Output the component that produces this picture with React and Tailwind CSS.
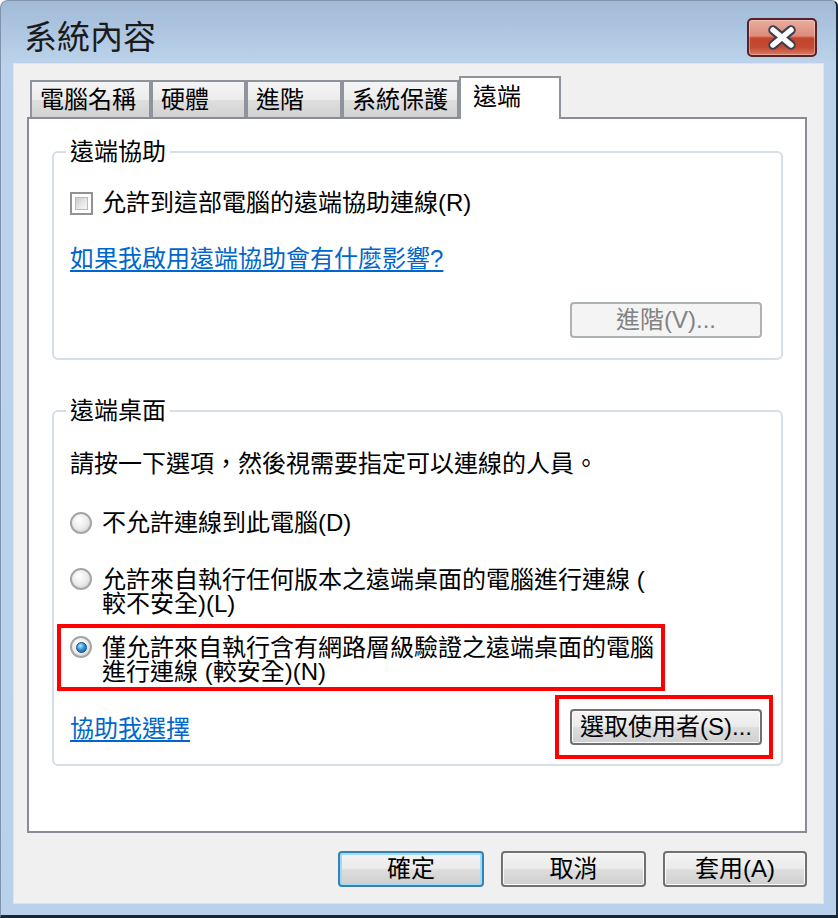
const font = "font-['Liberation_Sans','Noto_Sans_CJK_TC',sans-serif]"

const TABS = [
  { label: '電腦名稱', w: 'w-[121px]' },
  { label: '硬體', w: 'w-[95px]' },
  { label: '進階', w: 'w-[96px]' },
  { label: '系統保護', w: 'w-[117px]' },
]

function Radio({ checked }) {
  return (
    <span className="w-[22px] h-[22px] shrink-0 rounded-full border-2 border-[#a3a5a8] bg-[radial-gradient(circle_at_40%_35%,#ffffff,#ececec_50%,#c8c8c8)] flex items-center justify-center">
      {checked && (
        <span className="w-[11px] h-[11px] rounded-full border border-[#1b4a78] bg-[radial-gradient(circle_at_38%_32%,#b4ecff,#2f95dc_45%,#144e8a)]" />
      )}
    </span>
  )
}

function Checkbox() {
  return (
    <span className="w-[23px] h-[23px] shrink-0 border-2 border-[#929292] bg-white p-[3px] flex">
      <span className="flex-1 bg-[linear-gradient(135deg,#c9cbce,#e9e9e9_60%,#f7f7f7)] border border-[#b9bbbe]" />
    </span>
  )
}

function WinButton({ children, className = '', primary, disabled }) {
  let look = 'border-[#707070] bg-[linear-gradient(to_bottom,#f3f3f3_0%,#ebebeb_48%,#dddddd_52%,#cfcfcf_100%)] shadow-[inset_0_0_0_1px_#fbfbfb] text-black'
  if (primary) look = 'border-[#3c7fb1] bg-[linear-gradient(to_bottom,#f3f3f3_0%,#ebebeb_48%,#dddddd_52%,#cfcfcf_100%)] shadow-[inset_0_0_0_2px_#9bdcf8] text-black'
  if (disabled) look = 'border-[#adb2b5] bg-[#f4f4f4] text-[#838383]'
  return (
    <div className={`h-[36px] rounded-[4px] border-2 flex items-center justify-center text-[24px] leading-[24px] ${look} ${className}`}>
      {children}
    </div>
  )
}

function GroupBox({ title, children, className = '' }) {
  return (
    <fieldset className={`ml-[23px] mr-[22px] border-2 border-[#d5dfe5] rounded-[6px] pl-[12px] pr-[19px] ${className}`}>
      <legend className="px-[4px] text-[24px] leading-[24px] text-black">{title}</legend>
      <div className="pl-[4px] flex flex-col">{children}</div>
    </fieldset>
  )
}

export default function App() {
  return (
    <div className={`w-[838px] h-[918px] flex flex-col rounded-tl-[8px] rounded-tr-[6px] border-t border-l border-r-2 border-b-[3px] border-t-[#7f93aa] border-l-[#7f93aa] border-r-[#1c2a35] border-b-[#1a2630] bg-[linear-gradient(to_bottom,#a1bad6_0px,#bcd3eb_64px,#b9d1ea_100%)] overflow-hidden ${font}`}>
      {/* title bar */}
      <div className="h-[63px] shrink-0 flex items-start justify-between pl-[23px] pr-[19px]">
        <div className="mt-[17px] text-[33px] leading-[40px] text-[#1b1b1b]">系統內容</div>
        <div className="mt-[17px] w-[70px] h-[39px] rounded-[5px] border-2 border-[#55232a] bg-[linear-gradient(to_bottom,#e9ad9f_0%,#dc8d7b_45%,#c2452d_52%,#c44a31_78%,#d87a62_100%)] shadow-[inset_0_0_0_1px_rgba(255,220,210,0.45)] flex items-center justify-center">
          <svg width="30" height="25" viewBox="0 0 30 25">
            <path d="M6 5 L24 20 M24 5 L6 20" stroke="#3d3f52" strokeWidth="9.5" strokeLinecap="round" fill="none" />
            <path d="M6 5 L24 20 M24 5 L6 20" stroke="#ffffff" strokeWidth="5.5" strokeLinecap="round" fill="none" />
          </svg>
        </div>
      </div>

      {/* client area */}
      <div className="ml-[13px] w-[809px] h-[839px] shrink-0 bg-[#f0f0f0] shadow-[0_0_0_1px_#d9e5f2] pl-[13px] pt-[12px] flex flex-col">
        <div className="h-[41px] flex items-end pl-[3px]">
          {TABS.map(t => (
            <div
              key={t.label}
              className={`${t.w} h-[37px] border-2 border-b-0 border-[#8f939b] bg-[linear-gradient(to_bottom,#f5f5f5,#ececec_50%,#dedede_52%,#d2d2d2)] flex items-center pl-[8px] text-[24px] leading-[24px] text-black`}
            >
              {t.label}
            </div>
          ))}
          <div className="w-[102px] h-[43px] -mb-[2px] relative z-10 border-2 border-b-0 border-[#8f939b] bg-white pl-[12px] pt-[7px] text-[24px] leading-[24px] text-black">
            遠端
          </div>
        </div>

        <div className="w-[780px] h-[716px] shrink-0 border-2 border-[#898c95] bg-white flex flex-col">
          <GroupBox title="遠端協助" className="mt-[21px]">
            <div className="mt-[26px] h-[26px] flex items-center gap-[9px] text-[24px] leading-[24px] text-black">
              <Checkbox />
              <span>允許到這部電腦的遠端協助連線(R)</span>
            </div>
            <div className="mt-[30px] h-[26px] flex items-center text-[24px] leading-[24px] text-[#0066cc] underline underline-offset-[3px]">
              如果我啟用遠端協助會有什麼影響?
            </div>
            <div className="mt-[30px] mb-[20px] flex justify-end">
              <WinButton disabled className="w-[192px]">進階(V)...</WinButton>
            </div>
          </GroupBox>

          <GroupBox title="遠端桌面" className="mt-[39px]">
            <div className="mt-[29px] h-[24px] flex items-center text-[24px] leading-[24px] text-black">
              請按一下選項，然後視需要指定可以連線的人員。
            </div>
            <div className="mt-[35px] h-[24px] flex items-center gap-[10px] text-[24px] leading-[24px] text-black">
              <Radio />
              <span>不允許連線到此電腦(D)</span>
            </div>
            <div className="mt-[33px] flex items-start gap-[10px] text-[24px] leading-[24px] text-black">
              <Radio />
              <span>允許來自執行任何版本之遠端桌面的電腦進行連線 (<br />較不安全)(L)</span>
            </div>
            <div className="mt-[8px] -ml-[13px] w-[608px] h-[67px] border-4 border-[#ff0000] pl-[9px] pt-[8px] flex items-start gap-[10px] text-[24px] leading-[24px] text-black">
              <Radio checked />
              <span>僅允許來自執行含有網路層級驗證之遠端桌面的電腦<br />進行連線 (較安全)(N)</span>
            </div>
            <div className="mt-[4px] mb-[5px] h-[64px] flex items-center justify-between">
              <span className="text-[24px] leading-[24px] text-[#0066cc] underline underline-offset-[3px] mt-[4px]">協助我選擇</span>
              <div className="-mr-[11px] h-[64px] border-4 border-[#ff0000] pl-[11px] pr-[7px] flex items-center">
                <WinButton className="w-[192px]">選取使用者(S)...</WinButton>
              </div>
            </div>
          </GroupBox>
        </div>

        <div className="mt-[18px] pr-[16px] flex justify-end gap-[17px]">
          <WinButton primary className="w-[146px]">確定</WinButton>
          <WinButton className="w-[145px]">取消</WinButton>
          <WinButton className="w-[144px]">套用(A)</WinButton>
        </div>
      </div>
    </div>
  )
}
